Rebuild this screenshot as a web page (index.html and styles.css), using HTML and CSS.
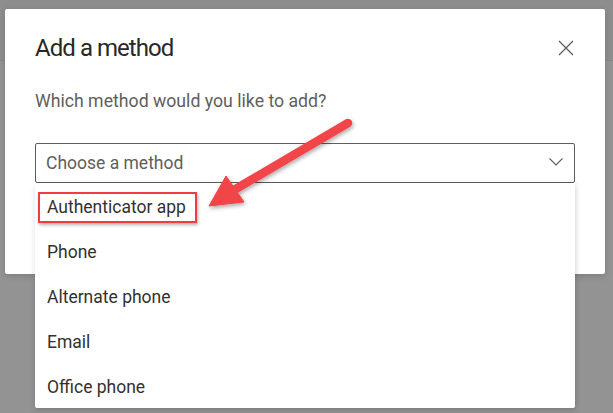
FILE: index.html
```html
<!DOCTYPE html>
<html>
<head>
<meta charset="utf-8">
<link rel="stylesheet" href="styles.css">
</head>
<body>
<div class="page">
  <div class="backdrop-top"></div>
  <div class="dialog">
    <div class="dialog-head">
      <h1 class="title">Add a method</h1>
      <button class="close" aria-label="Close">
        <svg width="16" height="16" viewBox="0 0 16 16"><path d="M1 1 L15 15 M15 1 L1 15" stroke="#605e5c" stroke-width="1.3" fill="none"/></svg>
      </button>
    </div>
    <p class="question">Which method would you like to add?</p>
    <div class="select">
      <div class="select-box">
        <span class="placeholder">Choose a method</span>
        <svg class="chevron" width="14" height="8" viewBox="0 0 14 8"><path d="M0.5 0.5 L7 7 L13.5 0.5" stroke="#605e5c" stroke-width="1.1" fill="none"/></svg>
      </div>
      <ul class="options">
        <li class="option">Authenticator app</li>
        <li class="option">Phone</li>
        <li class="option">Alternate phone</li>
        <li class="option">Email</li>
        <li class="option">Office phone</li>
        <li class="highlight"></li>
      </ul>
    </div>
  </div>
  <svg class="arrow" width="613" height="413" viewBox="0 0 613 413">
    <defs>
      <filter id="sh" x="-20%" y="-20%" width="140%" height="140%">
        <feDropShadow dx="1" dy="2" stdDeviation="2" flood-color="#000" flood-opacity="0.35"/>
      </filter>
    </defs>
    <g filter="url(#sh)" fill="#f1444a" stroke="#f1444a">
      <line x1="348" y1="123" x2="234" y2="190" stroke-width="8.5" stroke-linecap="round"/>
      <polygon points="209,206 226,176 244,202" stroke-width="1" stroke-linejoin="round"/>
    </g>
  </svg>
</div>
</body>
</html>
```

FILE: styles.css
```css
html, body {
  margin: 0;
  padding: 0;
}
body {
  width: 613px;
  height: 413px;
  overflow: hidden;
  background: #939393;
  font-family: Roboto, "Open Sans", sans-serif;
}
.page {
  position: relative;
  width: 613px;
  height: 413px;
}
.backdrop-top {
  height: 60px;
  background: #8d8d8d;
  border-bottom: 1px solid #868686;
}
.dialog {
  position: absolute;
  left: 5px;
  top: 9px;
  width: 600px;
  height: 265px;
  box-sizing: border-box;
  background: #ffffff;
  border-radius: 2px;
  padding: 23px 30px 0 30px;
  box-shadow: 0 2px 6px rgba(0,0,0,0.15);
}
.dialog-head {
  display: flex;
  justify-content: space-between;
  align-items: center;
  height: 32px;
}
.title {
  margin: 0;
  font-size: 24px;
  font-weight: 400;
  line-height: 32px;
  letter-spacing: -0.95px;
  color: #292827;
}
.close {
  border: 0;
  background: none;
  padding: 0;
  width: 16px;
  height: 16px;
  margin-right: 1px;
  display: flex;
}
.question {
  margin: 26px 0 0 0;
  font-size: 17.7px;
  line-height: 22px;
  color: #605e5c;
}
.select {
  position: relative;
  margin-top: 31px;
  width: 540px;
}
.select-box {
  height: 40px;
  box-sizing: border-box;
  border: 1px solid #605e5c;
  border-radius: 2px;
  display: flex;
  align-items: center;
  justify-content: space-between;
  padding: 0 10px 0 10px;
}
.placeholder {
  font-size: 17.5px;
  color: #605e5c;
}
.chevron {
  margin-right: 1px;
  margin-top: -2px;
}
.options {
  position: absolute;
  left: 0;
  top: 40px;
  width: 540px;
  margin: 0;
  padding: 0;
  list-style: none;
  background: #ffffff;
  border-radius: 0 0 2px 2px;
  box-shadow: 0 3px 6px rgba(0,0,0,0.12), 2px 0 4px rgba(0,0,0,0.06);
}
.option {
  height: 45px;
  display: flex;
  align-items: center;
  padding-left: 12px;
  padding-top: 2px;
  box-sizing: border-box;
  font-size: 17.5px;
  color: #323130;
}
.highlight {
  position: absolute;
  left: 3px;
  top: 9px;
  width: 159px;
  height: 31px;
  box-sizing: border-box;
  border: 2px solid #ee3e44;
  box-shadow: 1px 2px 3px rgba(0,0,0,0.3);
}
.arrow {
  position: absolute;
  left: 0;
  top: 0;
  pointer-events: none;
}
```
